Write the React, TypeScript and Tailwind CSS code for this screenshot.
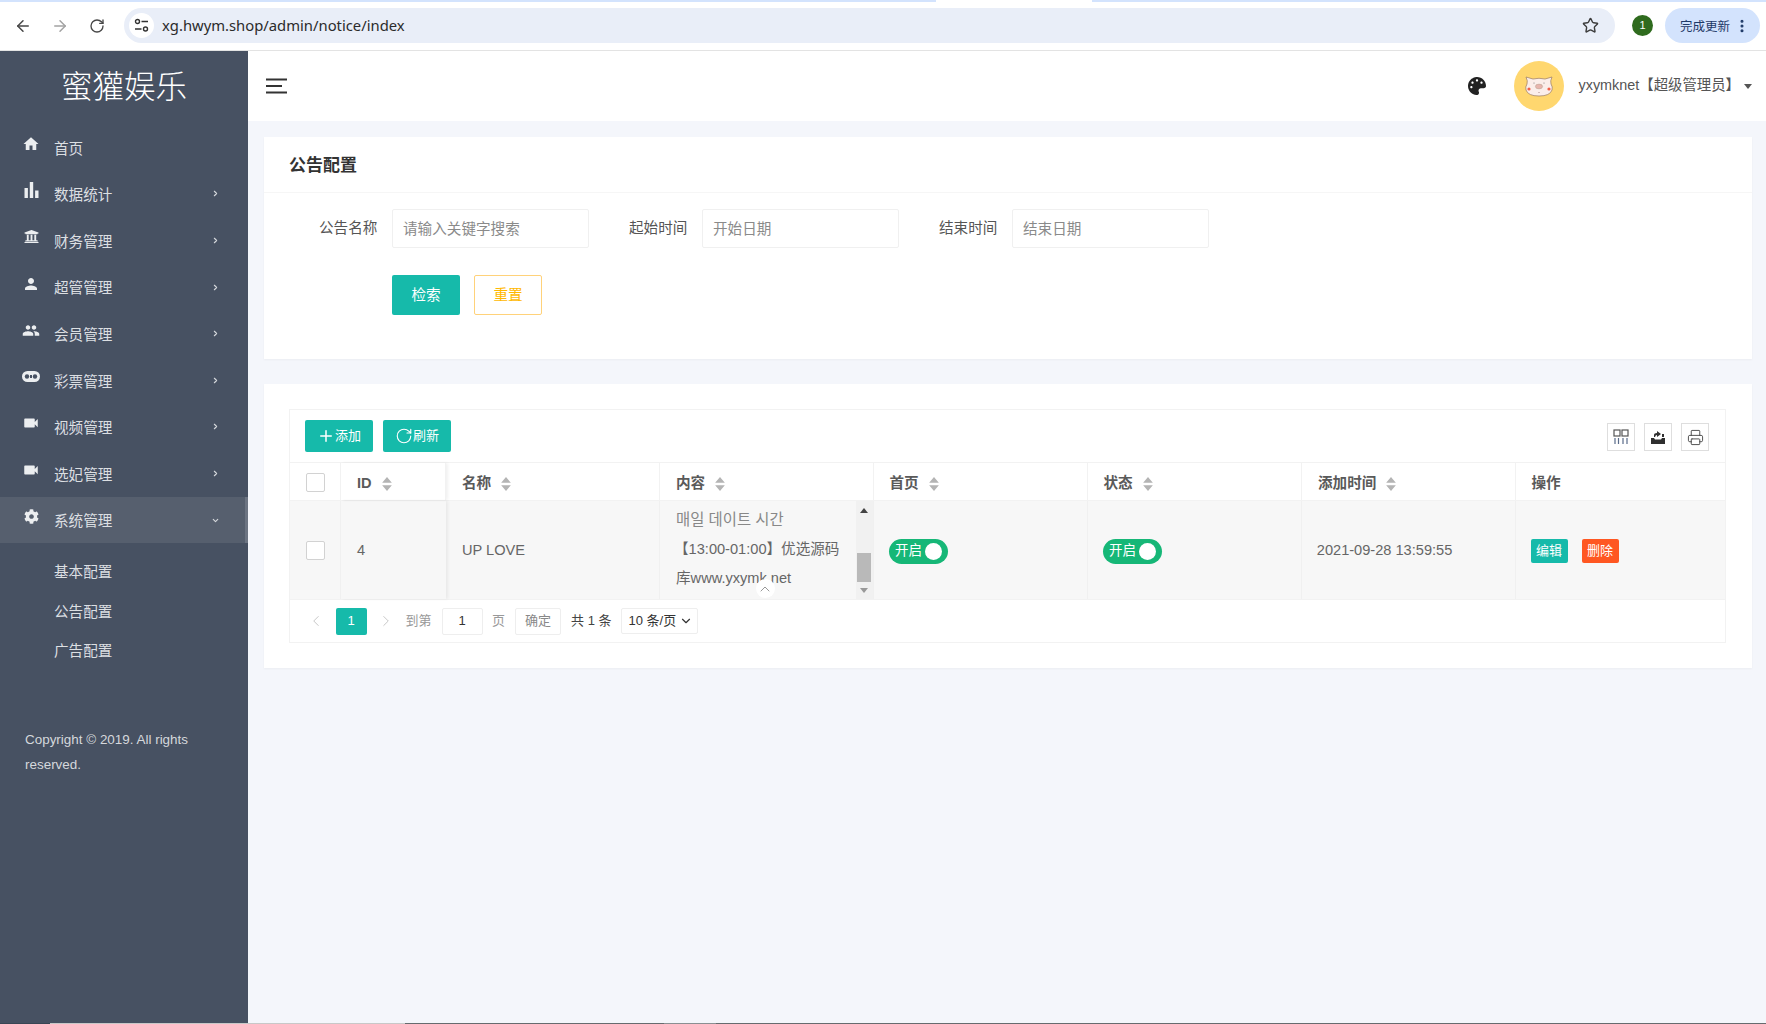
import { ArrowLeft, ArrowRight, ChevronDown, ChevronLeft, ChevronRight, ChevronUp, EllipsisVertical, Plus, Printer, RotateCw, Star } from "lucide-react"
import type { ReactNode } from "react"
import { FaCog, FaPalette, FaUniversity } from "react-icons/fa"
import { MdHome, MdPeople, MdPerson, MdVideocam } from "react-icons/md"

const cjk = "font-['Liberation_Sans','Noto_Sans_CJK_SC',sans-serif]"

const BarsIcon = () => (
  <svg width="15" height="16" viewBox="0 0 15 16" fill="currentColor">
    <rect x="0.5" y="6" width="3.4" height="10" />
    <rect x="5.8" y="0" width="3.4" height="16" />
    <rect x="11.1" y="8.5" width="3.4" height="7.5" />
  </svg>
)

const GameIcon = () => (
  <svg width="18" height="11" viewBox="0 0 18 11">
    <rect x="0" y="0" width="18" height="11" rx="5.5" fill="currentColor" />
    <circle cx="5" cy="5.5" r="2.2" fill="#475162" />
    <circle cx="13" cy="5.5" r="2.2" fill="#475162" />
    <rect x="8" y="4" width="2" height="3" fill="#475162" />
  </svg>
)

const SiteInfoIcon = () => (
  <svg width="15" height="15" viewBox="0 0 15 15" fill="none" stroke="#333" strokeWidth="1.4">
    <circle cx="3.5" cy="3.5" r="2" />
    <path d="M7.5 3.5H14M1 11H7.5" />
    <circle cx="11.5" cy="11" r="2" />
  </svg>
)

const menu = [
  { label: "首页", icon: <MdHome size={20} /> },
  { label: "数据统计", icon: <BarsIcon />, arrow: true },
  { label: "财务管理", icon: <FaUniversity size={15} />, arrow: true },
  { label: "超管管理", icon: <MdPerson size={20} />, arrow: true },
  { label: "会员管理", icon: <MdPeople size={21} />, arrow: true },
  { label: "彩票管理", icon: <GameIcon />, arrow: true },
  { label: "视频管理", icon: <MdVideocam size={20} />, arrow: true },
  { label: "选妃管理", icon: <MdVideocam size={20} />, arrow: true },
]

const MenuItem = ({ label, icon, arrow, active }: { label: string; icon: ReactNode; arrow?: boolean; active?: boolean }) => (
  <div className={`flex h-[46.6px] items-center pl-[22px] ${active ? "border-r-[3px] border-[#6c7482] bg-[#565f6e] pr-[25px]" : "pr-[28px]"}`}>
    <span className="mb-[7px] mr-[14px] flex w-[18px] justify-center text-[#eceef0]">{icon}</span>
    <span className="mt-[4.5px] text-[14.6px] text-[#dcdfe2]">{label}</span>
    {arrow && (
      <span className="ml-auto text-[#d5d8dc]">
        {active ? <ChevronDown size={9} strokeWidth={3} /> : <ChevronRight size={9} strokeWidth={3} />}
      </span>
    )}
  </div>
)

const Sidebar = () => (
  <aside className="flex w-[248px] shrink-0 flex-col bg-[#475162]">
    <div className="flex h-[73px] shrink-0 items-center justify-center text-[31.5px] font-light text-white">蜜獾娱乐</div>
    {menu.map((item) => (
      <MenuItem key={item.label} {...item} />
    ))}
    <MenuItem label="系统管理" icon={<FaCog size={15} />} arrow active />
    <div className="pt-[10px]">
      {["基本配置", "公告配置", "广告配置"].map((label) => (
        <div key={label} className="flex h-[39.5px] items-center pl-[54px] text-[14.6px] text-[#dcdfe2]">
          {label}
        </div>
      ))}
    </div>
    <p className="mt-[55px] px-[25px] text-[13.45px] leading-[25px] text-[#d5d8dc]">Copyright © 2019. All rights reserved.</p>
  </aside>
)

const ChromeBar = () => (
  <div className="shrink-0 border-b border-[#e3e3e3] bg-white">
    <div className="flex h-[2px]">
      <div className="w-[936px] bg-[#d3e3fd]" />
      <div className="w-[156px]" />
      <div className="flex-1 bg-[#d3e3fd]" />
    </div>
    <div className="flex h-[48px] items-start pt-[6px]">
      <div className="flex h-[35px] w-[124px] items-center pl-[14px] text-[#474747]">
        <ArrowLeft size={18} />
        <ArrowRight size={18} className="ml-[19px] text-[#a3a3a3]" />
        <RotateCw size={16} className="ml-[20px]" />
      </div>
      <div className="flex h-[35px] w-[1491px] items-center rounded-full bg-[#e9eef8] pl-[5px]">
        <span className="flex h-[25px] w-[25px] items-center justify-center rounded-full bg-white">
          <SiteInfoIcon />
        </span>
        <span className="ml-[8px] font-['Noto_Sans',sans-serif] text-[14.8px] text-[#2b2b2b]">xg.hwym.shop/admin/notice/index</span>
        <Star size={17} className="ml-auto mr-[16px] text-[#3d3d3d]" />
      </div>
      <span className="ml-[17px] mt-[7px] flex h-[21px] w-[21px] items-center justify-center rounded-full bg-[#2f6b1e] text-[11px] text-white">1</span>
      <div className="ml-[12px] flex h-[35px] w-[95px] items-center rounded-full bg-[#d3e3fd] pl-[15px] text-[12.5px] text-[#1f3a68]">
        <span className="mt-[3px]">完成更新</span>
        <EllipsisVertical size={16} strokeWidth={2.6} className="ml-[4px]" />
      </div>
    </div>
  </div>
)

const PigAvatar = () => (
  <div className="h-[50px] w-[50px] shrink-0 rounded-full bg-[#ffd76f]">
    <svg width="50" height="50" viewBox="0 0 50 50">
      <path d="M12 16 L19 18 Q25 16.5 31 18 L38 16 Q36 20 37 23 Q39 26 38 29 Q36 35 25 35 Q14 35 12 29 Q11 26 13 23 Q14 20 12 16 Z" fill="#fbeeea" stroke="#9a7a62" strokeWidth="0.7" />
      <ellipse cx="25" cy="25.5" rx="3.6" ry="2.4" fill="#e7b5ad" stroke="#a98" strokeWidth="0.4" />
      <circle cx="15" cy="28" r="1.6" fill="#f2604a" />
      <circle cx="35" cy="28" r="1.6" fill="#f2604a" />
      <circle cx="20" cy="22" r="0.5" fill="#666" />
      <circle cx="30" cy="22" r="0.5" fill="#666" />
      <path d="M24 31 L25 32 L26 31" fill="none" stroke="#a88" strokeWidth="0.5" />
    </svg>
  </div>
)

const TopHeader = () => (
  <header className="flex h-[70px] shrink-0 items-center bg-white pl-[18px] pr-[13px]">
    <svg width="21" height="16" viewBox="0 0 21 16" stroke="#333" strokeWidth="2">
      <path d="M0 1.5H21M0 8H16M0 14.5H21" />
    </svg>
    <FaPalette size={18} className="ml-auto text-[#222]" />
    <div className="ml-[28px]">
      <PigAvatar />
    </div>
    <span className="ml-[14px] text-[14.4px] text-[#555]">yxymknet【超级管理员】</span>
    <span className="ml-[4px] mr-px mt-[1px] border-x-[4px] border-t-[5px] border-x-transparent border-t-[#555]" />
  </header>
)

const SearchField = ({ label, placeholder }: { label: string; placeholder: string }) => (
  <div className="mr-[40px] flex items-center">
    <label className="mr-[15px] w-[58px] shrink-0 whitespace-nowrap text-[14.6px] text-[#555]">{label}</label>
    <input
      readOnly
      placeholder={placeholder}
      className="h-[39px] w-[197px] rounded-[2px] border border-[#f0f0f0] px-[10px] text-[14.6px] outline-none placeholder:text-[#8a8a8a]"
    />
  </div>
)

const SearchCard = () => (
  <section className="h-[222px] shrink-0 bg-white shadow-[0_1px_2px_rgba(0,0,0,0.04)]">
    <div className="flex h-[56px] items-center border-b border-[#f6f6f6] pl-[25px] pt-[3px] text-[17px] font-bold text-[#333]">公告配置</div>
    <div className="flex pl-[55px] pt-[16px]">
      <SearchField label="公告名称" placeholder="请输入关键字搜索" />
      <SearchField label="起始时间" placeholder="开始日期" />
      <SearchField label="结束时间" placeholder="结束日期" />
    </div>
    <div className="flex gap-[14px] pl-[128px] pt-[26.5px]">
      <button className="h-[40px] w-[68px] rounded-[2px] bg-[#16baaa] pt-[2px] text-[14.6px] text-white">检索</button>
      <button className="h-[40px] w-[68px] rounded-[2px] border border-[#ffd27a] bg-white pt-[2px] text-[14.6px] text-[#ffb800]">重置</button>
    </div>
  </section>
)

const SortIcon = () => (
  <svg width="10" height="14" viewBox="0 0 9 13" fill="#b4b4b4" className="ml-[10px]">
    <path d="M4.5 0 L9 5.4 H0 Z M0 7.6 H9 L4.5 13 Z" />
  </svg>
)

const Checkbox = () => <span className="block h-[19px] w-[19px] rounded-[2px] border border-[#d2d2d2] bg-white" />

const Toggle = () => (
  <span className="flex h-[25px] w-[59px] items-center justify-between rounded-full bg-[#16b777] pl-[6px] pr-[6px] text-[13.5px] text-white">
    开启
    <span className="h-[17px] w-[17px] rounded-full bg-white" />
  </span>
)

const columns = [
  { label: "ID", sort: true },
  { label: "名称", sort: true },
  { label: "内容", sort: true },
  { label: "首页", sort: true },
  { label: "状态", sort: true },
  { label: "添加时间", sort: true },
  { label: "操作", sort: false },
]

const gridCols = "grid grid-cols-[51px_105px_214px_213.5px_214px_214.5px_213.5px_1fr]"

const ToolIcon = ({ children }: { children: ReactNode }) => (
  <span className="flex h-[28px] w-[28px] items-center justify-center border border-[#dedede] text-[#333]">{children}</span>
)

const NoticeTable = () => (
  <div className="border border-[#f2f2f2]">
    <div className="flex h-[52px] items-start justify-between pl-[15px] pr-[16px]">
      <div className="flex gap-[10px] pt-[10px]">
        <button className="flex h-[32px] w-[68px] items-center justify-center rounded-[2px] bg-[#16baaa] text-[13px] text-white">
          <Plus size={18} strokeWidth={2} />
          添加
        </button>
        <button className="flex h-[32px] w-[68px] items-center justify-center rounded-[2px] bg-[#16baaa] text-[13px] text-white">
          <RotateCw size={18} strokeWidth={1.5} />
          刷新
        </button>
      </div>
      <div className="flex gap-[9px] pt-[13px]">
        <ToolIcon>
          <svg width="16" height="16" viewBox="0 0 16 16" fill="none" stroke="#555" strokeWidth="1.2">
            <rect x="1" y="1" width="6" height="6" />
            <rect x="9" y="1" width="6" height="6" />
            <path d="M2 9v6M5.5 9v6M10 9v6M14 9v6" stroke="#5a6c8a" />
          </svg>
        </ToolIcon>
        <ToolIcon>
          <svg width="16" height="16" viewBox="0 0 16 16" fill="#2f2f2f">
            <path d="M1 9 H4 L5 10.5 H11 L12 9 H15 V15 H1 Z" />
            <path d="M4 8 V6 Q4 4 7 4 V2 L11 5 L7 8 V6 Q5.5 6 5 8 Z" />
            <rect x="12" y="5" width="2" height="3" />
          </svg>
        </ToolIcon>
        <ToolIcon>
          <Printer size={17} strokeWidth={1.3} className="text-[#444]" />
        </ToolIcon>
      </div>
    </div>
    <div className={`${gridCols} h-[39px] border-y border-[#f2f2f2]`}>
      <div className="flex items-center justify-center border-r border-[#f2f2f2] pt-[1.5px]">
        <Checkbox />
      </div>
      {columns.map((col, i) => (
        <div
          key={col.label}
          className={`flex items-center pl-[16px] pt-[5px] text-[14.6px] font-bold text-[#5a5a5a] ${i === 0 ? "shadow-[2px_0_3px_rgba(0,0,0,0.06)]" : ""} ${i < 6 ? "border-r border-[#f2f2f2]" : ""}`}
        >
          {col.label}
          {col.sort && <SortIcon />}
        </div>
      ))}
    </div>
    <div className={`${gridCols} h-[98px] bg-[#f7f7f7] text-[14.6px] text-[#666]`}>
      <div className="flex items-center justify-center border-r border-[#f0f0f0]">
        <Checkbox />
      </div>
      <div className="flex items-center pl-[16px] pt-[2px] shadow-[2px_0_3px_rgba(0,0,0,0.06)]">4</div>
      <div className="flex items-center border-r border-[#f0f0f0] pl-[16px] pt-[2px]">UP LOVE</div>
      <div className="relative overflow-hidden border-r border-[#f0f0f0] pl-[16px] pt-[4px] leading-[29.5px]">
        <div className="text-[15.4px] text-[#888]">매일 데이트 시간</div>
        <div className="-ml-[2px]">【13:00-01:00】优选源码</div>
        <div>库www.yxymk.net</div>
        <div className="absolute right-0 top-0 flex h-full w-[17px] flex-col items-center bg-[#f1f1f1]">
          <span className="mt-[7px] border-x-[4px] border-b-[5px] border-x-transparent border-b-[#444]" />
          <span className="mt-[39.5px] h-[29px] w-[14px] bg-[#b9b9b9]" />
          <span className="mt-[6px] border-x-[4px] border-t-[5px] border-x-transparent border-t-[#999]" />
        </div>
        <span className="absolute left-[95.5px] top-[78px] flex h-[19px] w-[19px] items-center justify-center rounded-full bg-white text-[#888]">
          <ChevronUp size={16} strokeWidth={1.3} />
        </span>
      </div>
      <div className="flex items-center border-r border-[#f0f0f0] pl-[15.5px] pt-[2px]">
        <Toggle />
      </div>
      <div className="flex items-center border-r border-[#f0f0f0] pl-[15.5px] pt-[2px]">
        <Toggle />
      </div>
      <div className="flex items-center border-r border-[#f0f0f0] pl-[14.8px] pt-[2px]">2021-09-28 13:59:55</div>
      <div className="flex items-center gap-[14px] pl-[15px] pt-[2px]">
        <button className="h-[24px] w-[37px] rounded-[2px] bg-[#16baaa] text-[13px] text-white">编辑</button>
        <button className="h-[24px] w-[37px] rounded-[2px] bg-[#ff5722] text-[13px] text-white">删除</button>
      </div>
    </div>
    <div className="flex h-[43px] items-center border-t border-[#f2f2f2] pl-[17px] text-[13px] text-[#999]">
      <ChevronLeft size={18} strokeWidth={1.2} className="text-[#c2c2c2]" />
      <span className="ml-[10.5px] flex h-[27px] w-[31px] items-center justify-center rounded-[2px] bg-[#16baaa] text-white">1</span>
      <ChevronRight size={18} strokeWidth={1.2} className="ml-[10px] text-[#c2c2c2]" />
      <span className="ml-[11px]">到第</span>
      <span className="ml-[10px] flex h-[27px] w-[41px] items-center justify-center rounded-[2px] border border-[#eee] text-[#333]">1</span>
      <span className="ml-[9.5px]">页</span>
      <span className="ml-[10px] flex h-[27px] w-[46px] items-center justify-center rounded-[2px] border border-[#eee] text-[#888]">确定</span>
      <span className="ml-[10px] text-[#444]">共 1 条</span>
      <span className="ml-[9px] flex h-[26px] w-[77px] items-center justify-between rounded-[2px] border border-[#eee] pl-[7px] pr-[4px] text-[#333]">
        10 条/页
        <ChevronDown size={14} strokeWidth={2} />
      </span>
    </div>
  </div>
)

export default function App() {
  return (
    <div className={`flex h-[1024px] w-[1766px] flex-col overflow-hidden bg-[#f4f6fb] ${cjk}`}>
      <ChromeBar />
      <div className="flex min-h-0 flex-1">
        <Sidebar />
        <main className="flex min-w-0 flex-1 flex-col">
          <TopHeader />
          <div className="flex flex-col gap-[25px] pl-[16px] pr-[14px] pt-[16px]">
            <SearchCard />
            <section className="h-[284px] shrink-0 bg-white pb-[26px] pl-[25px] pr-[26px] pt-[25px] shadow-[0_1px_2px_rgba(0,0,0,0.04)]">
              <NoticeTable />
            </section>
          </div>
        </main>
      </div>
      <div className="flex h-px shrink-0">
        <div className="w-[50px] bg-[#3a4654]" />
        <div className="w-[355px] bg-[#c8c8c8]" />
        <div className="w-[259px] bg-[#666b6e]" />
        <div className="w-[52px] bg-[#8a8f92]" />
        <div className="flex-1 bg-[#666b6e]" />
      </div>
    </div>
  )
}
